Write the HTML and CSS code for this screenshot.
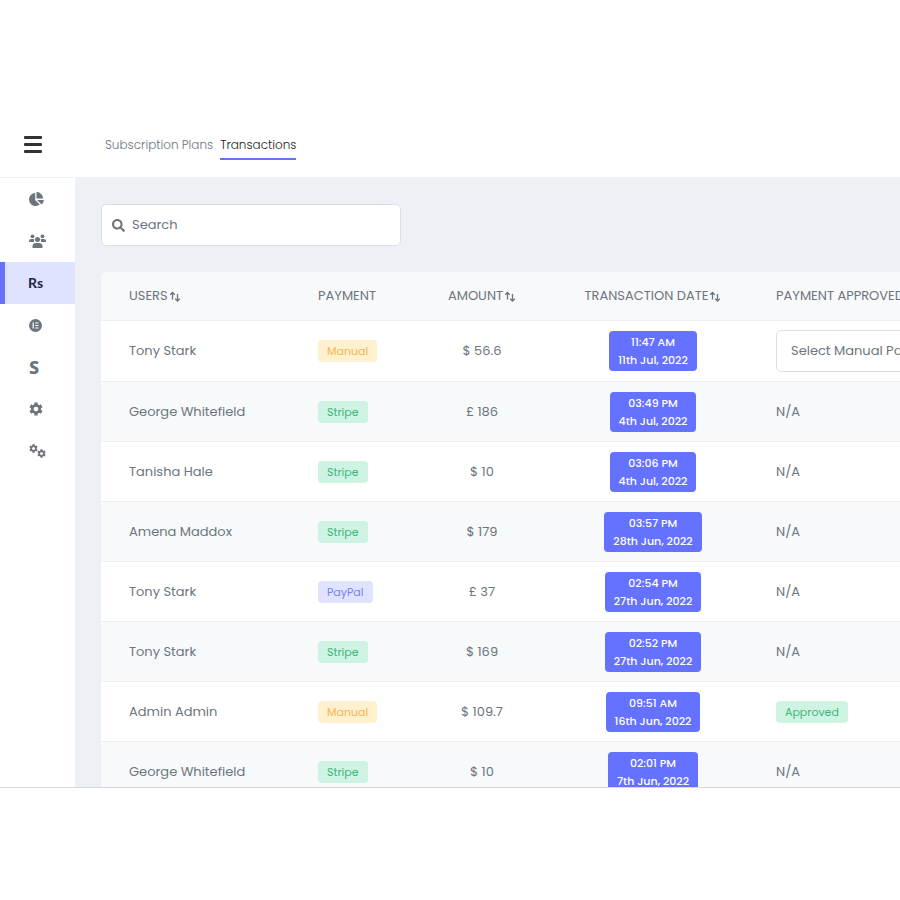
FILE: index.html
```html
<!DOCTYPE html>
<html lang="en">
<head>
<meta charset="utf-8">
<meta name="viewport" content="width=device-width, initial-scale=1">
<title>Transactions</title>
<link rel="stylesheet" href="styles.css">
</head>
<body>
<svg class="defs" aria-hidden="true">
  <symbol id="sort" viewBox="0 0 12 12">
    <path d="M3.500 8.500V1.500M1.200 3.800l2.300-2.300 2.300 2.300M8.500 3v7M6.200 7.700l2.300 2.300 2.300-2.300" fill="none" stroke="currentColor" stroke-width="1.300"/>
  </symbol>
  <symbol id="gear" viewBox="0 0 16 16">
    <g stroke="currentColor" stroke-width="3.800"><path d="M8 .5v3.700M8 11.800v3.700M1.500 4.250l3.200 1.850M11.300 9.900l3.200 1.850M1.500 11.750l3.200-1.850M11.300 6.100l3.200-1.850"/></g>
    <circle cx="8" cy="8" r="4.200" fill="none" stroke="currentColor" stroke-width="3"/>
  </symbol>
</svg>
<div class="app">
  <header class="topbar">
    <button class="menu" type="button" aria-label="Menu"><span></span><span></span><span></span></button>
    <nav class="tabs">
      <a href="#plans">Subscription Plans</a>
      <a href="#transactions" class="current">Transactions</a>
    </nav>
  </header>
  <div class="body">
    <nav class="sidebar">
      <a href="#dashboard" aria-label="Dashboard"><svg width="15" height="14" viewBox="0 0 544 512"><path fill="currentColor" d="M527.79 288H290.5l158.03 158.03c6.04 6.04 15.98 6.53 22.19.68 38.7-36.46 65.32-85.61 73.13-140.86 1.34-9.46-6.51-17.85-16.06-17.85zm-15.83-64.8C503.72 103.74 408.26 8.28 288.8.04 279.68-.59 272 7.1 272 16.24V240h223.77c9.14 0 16.82-7.68 16.19-16.8zM224 288V50.71c0-9.55-8.39-17.4-17.84-16.06C86.99 51.49-4.1 155.6.14 280.37 4.5 408.51 114.83 513.59 243.03 511.98c50.4-.63 96.97-16.87 135.26-44.03 7.9-5.6 8.42-17.23 1.57-24.08L224 288z"/></svg></a>
      <a href="#users" aria-label="Users"><svg width="17" height="14" viewBox="0 0 17 14" fill="currentColor"><circle cx="3.500" cy="2.300" r="1.900"/><circle cx="13.500" cy="2.300" r="1.900"/><circle cx="8.500" cy="5.500" r="2.500"/><path d="M0 8V7q0-2 2-2h2.500q.700 0 1 .5Q4.500 6.500 5 8zM17 8V7q0-2-2-2h-2.500q-.700 0-1 .5 1 1 .5 2.500zM3.500 14v-1.500q0-3.500 3.500-3.500h3q3.500 0 3.500 3.500V14z"/></svg></a>
      <a href="#rupee" class="active"><span class="rupee">Rs</span></a>
      <a href="#pages" aria-label="Pages"><svg width="13" height="13" viewBox="0 0 13 13"><circle cx="6.500" cy="6.500" r="6.500" fill="currentColor"/><path d="M4.200 3.500v6M6.200 4h3.300M6.200 6.500h3.300M6.200 9h3.300" stroke="#fff" stroke-width="1.200" fill="none"/></svg></a>
      <a href="#subscriptions"><span class="letter">S</span></a>
      <a href="#settings" aria-label="Settings"><svg width="14" height="14"><use href="#gear"/></svg></a>
      <a href="#system" aria-label="System settings"><svg width="17" height="14" viewBox="0 0 17 14"><use href="#gear" width="9" height="9"/><use href="#gear" x="8" y="5" width="9" height="9"/></svg></a>
    </nav>
    <main class="content">
      <label class="search">
        <svg width="13" height="13" viewBox="0 0 512 512"><path fill="currentColor" d="M505 442.7L405.3 343c-4.5-4.5-10.6-7-17-7H372c27.6-35.3 44-79.7 44-128C416 93.1 322.9 0 208 0S0 93.1 0 208s93.1 208 208 208c48.3 0 92.7-16.4 128-44v16.3c0 6.4 2.5 12.5 7 17l99.7 99.7c9.4 9.4 24.6 9.4 33.9 0l28.3-28.3c9.4-9.4 9.4-24.6.1-34zM208 336c-70.7 0-128-57.2-128-128 0-70.7 57.2-128 128-128 70.7 0 128 57.2 128 128 0 70.7-57.2 128-128 128z"/></svg>
        <input type="search" placeholder="Search" aria-label="Search">
      </label>
      <table>
        <colgroup><col class="c-user"><col class="c-pay"><col class="c-amount"><col class="c-date"><col></colgroup>
        <thead>
          <tr><th>USERS<svg width="12" height="12"><use href="#sort"/></svg></th><th>PAYMENT</th><th class="mid">AMOUNT<svg width="12" height="12"><use href="#sort"/></svg></th><th class="mid">TRANSACTION DATE<svg width="12" height="12"><use href="#sort"/></svg></th><th class="last">PAYMENT APPROVED</th></tr>
        </thead>
        <tbody>
          <tr><td>Tony Stark</td><td><span class="tag manual">Manual</span></td><td class="mid">$ 56.6</td><td class="mid"><span class="date">11:47 AM<br>11th Jul, 2022</span></td><td class="last"><select aria-label="Payment approved"><option>Select Manual Payment</option></select></td></tr>
          <tr><td>George Whitefield</td><td><span class="tag ok">Stripe</span></td><td class="mid">£ 186</td><td class="mid"><span class="date">03:49 PM<br>4th Jul, 2022</span></td><td class="last">N/A</td></tr>
          <tr><td>Tanisha Hale</td><td><span class="tag ok">Stripe</span></td><td class="mid">$ 10</td><td class="mid"><span class="date">03:06 PM<br>4th Jul, 2022</span></td><td class="last">N/A</td></tr>
          <tr><td>Amena Maddox</td><td><span class="tag ok">Stripe</span></td><td class="mid">$ 179</td><td class="mid"><span class="date">03:57 PM<br>28th Jun, 2022</span></td><td class="last">N/A</td></tr>
          <tr><td>Tony Stark</td><td><span class="tag paypal">PayPal</span></td><td class="mid">£ 37</td><td class="mid"><span class="date">02:54 PM<br>27th Jun, 2022</span></td><td class="last">N/A</td></tr>
          <tr><td>Tony Stark</td><td><span class="tag ok">Stripe</span></td><td class="mid">$ 169</td><td class="mid"><span class="date">02:52 PM<br>27th Jun, 2022</span></td><td class="last">N/A</td></tr>
          <tr><td>Admin Admin</td><td><span class="tag manual">Manual</span></td><td class="mid">$ 109.7</td><td class="mid"><span class="date">09:51 AM<br>16th Jun, 2022</span></td><td class="last"><span class="tag ok">Approved</span></td></tr>
          <tr><td>George Whitefield</td><td><span class="tag ok">Stripe</span></td><td class="mid">$ 10</td><td class="mid"><span class="date">02:01 PM<br>7th Jun, 2022</span></td><td class="last">N/A</td></tr>
        </tbody>
      </table>
    </main>
  </div>
</div>
</body>
</html>
```
FILE: styles.css
```css
* { box-sizing: border-box; }

body {
  margin: 0;
  padding: 112px 0;
  background: #fff;
  color: #6c757d;
  font: 13px/20px Poppins, Inter, sans-serif;
}

.defs { position: absolute; width: 0; height: 0; }

a { color: inherit; text-decoration: none; }

.app {
  display: flex;
  flex-direction: column;
  height: calc(100vh - 224px);
  overflow: hidden;
  border-bottom: 1px solid #d6d8dd;
}

.topbar {
  display: flex;
  flex: none;
  align-items: center;
  height: 66px;
  border-bottom: 1px solid #eef1f6;
}

.menu {
  display: flex;
  flex-direction: column;
  gap: 4px;
  width: 105px;
  padding: 0 0 0 24px;
  border: 0;
  background: none;
}

.menu span {
  width: 18px;
  height: 3px;
  border-radius: 1px;
  background: #333;
}

.tabs {
  display: flex;
  gap: 7px;
  font-size: 12px;
  font-weight: 300;
}

.tabs a { padding: 6px 0 3px; border-bottom: 2px solid transparent; }
.tabs .current { color: #212529; border-color: #6571ff; }

.body { display: flex; flex: 1; min-height: 0; }

.sidebar { flex: none; width: 75px; }

.sidebar a {
  display: flex;
  align-items: center;
  height: 42px;
  padding-left: 29px;
  color: #6c757d;
}

.sidebar .active {
  padding-left: 23px;
  border-left: 5px solid #6571ff;
  background: #e0e3ff;
  color: #212544;
}

.rupee { font: 700 14px/20px Lato, sans-serif; }
.letter { font: 800 18px/20px "Noto Sans", sans-serif; }

.content {
  flex: 1;
  min-width: 0;
  padding: 26px;
  overflow: hidden;
  background: #edf1f6;
}

.search {
  display: flex;
  align-items: center;
  gap: 7px;
  width: 300px;
  height: 42px;
  margin-bottom: 26px;
  padding: 0 10px;
  border: 1px solid #dcdfe5;
  border-radius: 5px;
  background: #fff;
}

.search input {
  flex: 1;
  min-width: 0;
  padding: 0;
  border: 0;
  outline: 0;
  background: none;
  color: inherit;
  font: inherit;
}

.search input::placeholder { color: #6c757d; opacity: 1; }

table {
  width: 100%;
  min-width: 890px;
  table-layout: fixed;
  border-spacing: 0;
  border-radius: 8px;
  overflow: hidden;
  background: #fff;
}

.c-user { width: 203px; }
.c-pay { width: 106px; }
.c-amount { width: 144px; }
.c-date { width: 198px; }

th, td {
  height: 60px;
  padding: 0 0 0 14px;
  border-bottom: 1px solid #edf0f3;
  text-align: left;
  font-weight: 400;
  white-space: nowrap;
}

th { height: 49px; background: #f7f9fb; }
th svg { margin-left: 1px; vertical-align: -3px; }
th:first-child, td:first-child { padding-left: 28px; }
.mid { padding: 0; text-align: center; }
.last { padding-left: 24px; }
tbody tr:nth-child(even) { background: #f7f9fb; }
tbody tr:first-child td { height: 61px; }

.tag {
  display: inline-block;
  padding: 0 9px;
  border-radius: 4px;
  font-size: 11px;
  line-height: 22px;
}

.manual { background: #fff0d0; color: #f4b74f; }
.ok { background: #cff3e2; color: #3eb57c; }
.paypal { background: #e0e3ff; color: #7780f5; }

.date {
  display: inline-block;
  padding: 2px 9px;
  border-radius: 4px;
  background: #6571ff;
  color: #fff;
  font-size: 11px;
  font-weight: 500;
  line-height: 18px;
  vertical-align: middle;
}

select {
  width: 210px;
  height: 42px;
  padding: 0 14px;
  border: 1px solid #dcdfe5;
  border-radius: 5px;
  appearance: none;
  background: #fff;
  color: inherit;
  font: inherit;
}
```
